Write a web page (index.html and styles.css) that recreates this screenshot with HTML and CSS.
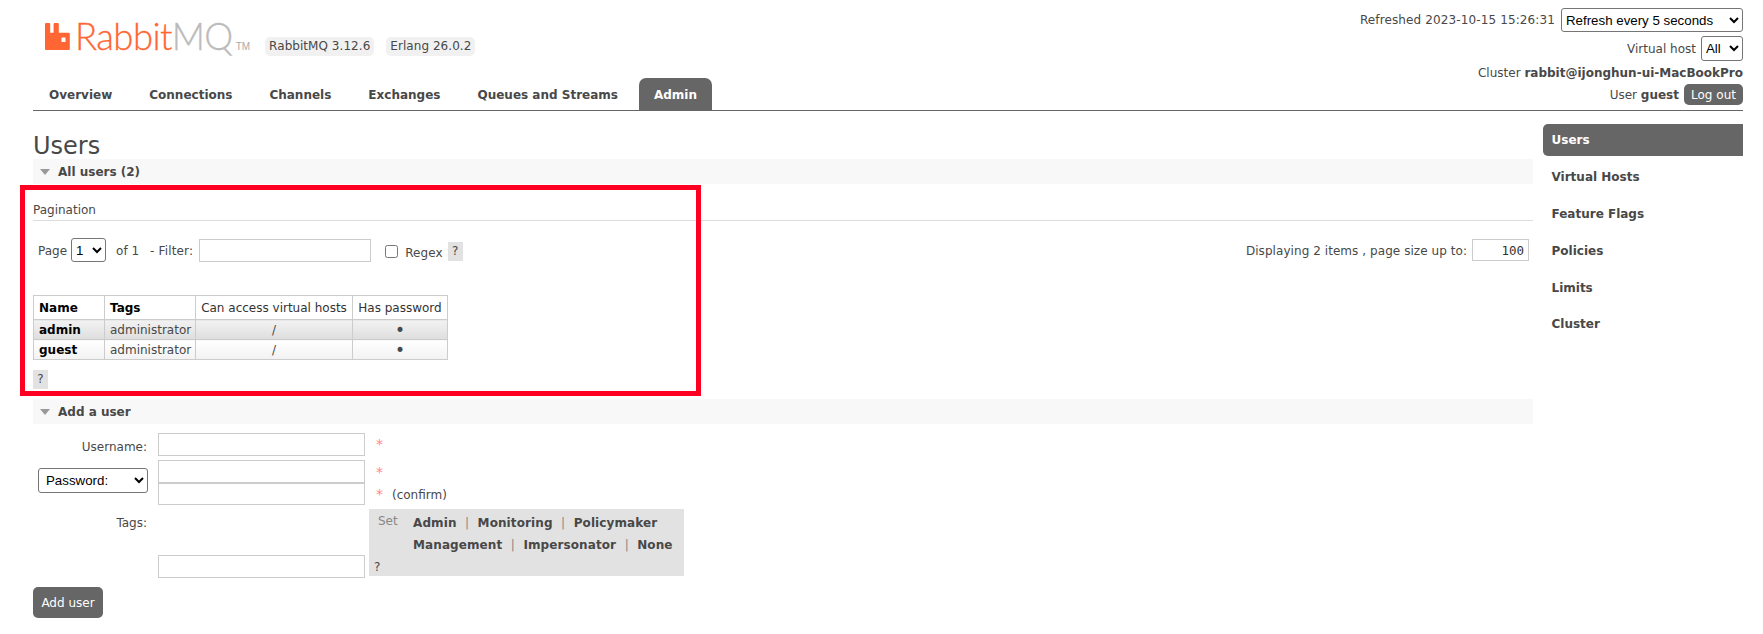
FILE: index.html
```html
<!DOCTYPE html>
<html lang="en">
<head>
<meta charset="utf-8">
<title>RabbitMQ Management</title>
<link rel="stylesheet" href="styles.css">
</head>
<body>
<div class="page">
  <header class="header">
    <div class="brand-col">
      <div class="brand">
        <svg class="logo-icon" viewBox="0 0 25 27" aria-hidden="true"><path fill="#ff6633" d="M1 0h3.2a1 1 0 0 1 1 1v8.8h3.4V1a1 1 0 0 1 1-1H12.800a1 1 0 0 1 1 1v8.800h10a1 1 0 0 1 1 1V26a1 1 0 0 1-1 1H1a1 1 0 0 1-1-1V1a1 1 0 0 1 1-1zM16.500 14.500v4.500h4v-4.500z" fill-rule="evenodd"/></svg>
        <span class="logo-text"><span class="logo-rabbit">Rabbit</span><span class="logo-mq">MQ</span></span>
        <span class="logo-tm">TM</span>
        <span class="chip chip-first">RabbitMQ 3.12.6</span>
        <span class="chip">Erlang 26.0.2</span>
      </div>
      <nav class="tabs">
        <a class="tab">Overview</a>
        <a class="tab">Connections</a>
        <a class="tab">Channels</a>
        <a class="tab">Exchanges</a>
        <a class="tab">Queues and Streams</a>
        <a class="tab tab-active">Admin</a>
      </nav>
    </div>
    <div class="status">
      <div class="status-row"><span class="refreshed">Refreshed 2023-10-15 15:26:31</span><select class="sel sel-refresh"><option>Refresh every 5 seconds</option></select></div>
      <div class="status-row status-vhost"><span>Virtual host</span><select class="sel sel-vhost"><option>All</option></select></div>
      <div class="status-row status-cluster"><span>Cluster&nbsp;<b>rabbit@ijonghun-ui-MacBookPro</b></span></div>
      <div class="status-row status-user"><span>User&nbsp;<b>guest</b></span><button class="logout" type="button">Log out</button></div>
    </div>
  </header>

  <div class="main">
    <main class="content">
      <h1 class="title">Users</h1>

      <section class="bar"><i class="arrow"></i>All users (2)</section>
      <div class="pagination-head">Pagination</div>
      <div class="pager">
        <span>Page</span>
        <select class="sel sel-page"><option>1</option></select>
        <span class="pager-of">of 1</span>
        <span class="pager-filter">- Filter:</span>
        <input class="field field-filter" type="text">
        <input class="check" type="checkbox">
        <span class="pager-regex">Regex</span>
        <span class="help help-regex">?</span>
        <span class="pager-display">Displaying 2 items , page size up to:</span>
        <input class="field field-size" type="text" value="100">
      </div>

      <table class="users">
        <thead>
          <tr><th class="left col-name">Name</th><th class="left col-tags">Tags</th><th class="col-vh">Can access virtual hosts</th><th class="col-pw">Has password</th></tr>
        </thead>
        <tbody>
          <tr class="alt1"><td class="strong">admin</td><td>administrator</td><td class="center">/</td><td class="center dot">•</td></tr>
          <tr class="alt2"><td class="strong">guest</td><td>administrator</td><td class="center">/</td><td class="center dot">•</td></tr>
        </tbody>
      </table>
      <div class="help help-table">?</div>

      <section class="bar bar-add"><i class="arrow"></i>Add a user</section>
      <form class="form">
        <label class="label label-user">Username:</label>
        <input class="field" type="text">
        <span class="star-cell"><span class="star">*</span></span>

        <div class="label label-pass"><select class="sel sel-pass"><option>Password:</option></select></div>
        <div class="pass-stack">
          <input class="field field-pass" type="text">
          <input class="field field-pass2" type="text">
        </div>
        <div class="star-cell star-stack">
          <span class="star">*</span>
          <span><span class="star">*</span><span class="confirm">(confirm)</span></span>
        </div>

        <label class="label label-tags">Tags:</label>
        <div class="tags-input"><input class="field" type="text"></div>
        <div class="tags-box">
          <span class="tags-set">Set</span>
          <div class="tags-lines">
            <div class="tags-line"><b>Admin</b><i>|</i><b>Monitoring</b><i>|</i><b>Policymaker</b></div>
            <div class="tags-line"><b>Management</b><i>|</i><b>Impersonator</b><i>|</i><b>None</b></div>
          </div>
          <span class="tags-help">?</span>
        </div>
      </form>
      <button class="add" type="button">Add user</button>
    </main>

    <aside class="side">
      <a class="side-item side-active">Users</a>
      <a class="side-item">Virtual Hosts</a>
      <a class="side-item">Feature Flags</a>
      <a class="side-item">Policies</a>
      <a class="side-item side-limits">Limits</a>
      <a class="side-item">Cluster</a>
    </aside>
  </div>
  <div class="highlight"></div>
</div>
</body>
</html>
```
FILE: styles.css
```css
* { box-sizing: border-box; }
html, body { margin: 0; padding: 0; background: #fff; }
body { font: 12px/14px "DejaVu Sans", Verdana, sans-serif; color: #484848; overflow: hidden; }
.page { position: relative; height: 634px; padding: 0 20px 0 33px; }

.header { display: flex; justify-content: space-between; height: 111px; border-bottom: 1px solid #666; }
.brand-col { display: flex; flex-direction: column; justify-content: space-between; }
.brand { display: flex; align-items: flex-start; padding: 23px 0 0 12px; }
.logo-icon { width: 25px; height: 27px; flex: none; }
.logo-text { font: 300 36.5px/27px Lato, "Liberation Sans", sans-serif; margin-left: 5px; letter-spacing: -0.6px; -webkit-text-stroke: 0.3px; }
.logo-rabbit { color: #ff6633; }
.logo-mq { color: #bbb; }
.logo-tm { font: 10px/12px "Liberation Sans", sans-serif; color: #aaa; margin: 18px 0 0 3px; }
.chip { background: #f1f1f1; border-radius: 5px; padding: 3px 4px; height: 19px; line-height: 13px; margin-top: 14px; margin-left: 12px; letter-spacing: 0.05px; }
.chip-first { margin-left: 15px; }

.tabs { display: flex; gap: 7px; padding-left: 1px; }
.tab { display: block; height: 32px; line-height: 34px; padding: 0 15px; font-weight: bold; border-radius: 7px 7px 0 0; color: #484848; }
.tab-active { background: #666; color: #fff; margin-left: -1px; }

.status { display: flex; flex-direction: column; align-items: flex-end; padding-top: 8px; }
.status-row { display: flex; align-items: center; }
.refreshed { letter-spacing: 0.12px; }
.status-vhost { margin-top: 4px; }
.status-cluster { margin-top: 5px; }
.status-user { margin-top: 4px; }
.sel { font: 13.3px "Liberation Sans", Arial, sans-serif; color: #000; background: #fff; border: 1px solid #767676; border-radius: 3px; }
.sel-refresh { width: 182px; height: 24px; margin-left: 6px; }
.sel-vhost { width: 42px; height: 25px; margin-left: 5px; }
.sel-page { width: 35px; height: 24px; margin: 0 0 0 4px; }
.sel-pass { width: 110px; height: 25px; padding-left: 3px; }
.logout { font: 12px "DejaVu Sans", sans-serif; color: #fff; background: #666; border: 0; border-radius: 5px; width: 59px; height: 21px; padding: 0; margin-left: 5px; }

.main { display: flex; align-items: flex-start; }
.content { width: 1500px; }
.title { font-size: 24px; line-height: 26px; font-weight: normal; margin: 22px 0 0; color: #484848; }
.bar { display: flex; align-items: center; height: 25px; background: #f8f8f8; font-weight: bold; padding-left: 7px; }
.arrow { width: 0; height: 0; border: 5px solid transparent; border-top: 6px solid #999; border-bottom: 0; margin-right: 8px; }

.pagination-head { margin-top: 19px; padding-bottom: 3px; border-bottom: 1px solid #ddd; }
.pager { display: flex; align-items: center; height: 24px; margin-top: 17px; padding: 0 4px 0 5px; }
.pager > span { padding-top: 1px; }
.pager-of { margin-left: 10px; }
.pager-filter { margin-left: 11px; letter-spacing: 0.15px; }
.field { border: 1px solid #ccc; height: 23px; width: 207px; background: #fff; padding: 0 4px; display: block; margin: 0; }
.field-filter { width: 172px; margin-left: 6px; }
.check { width: 13px; height: 13px; margin: 2px 0 0 14px; }
.pager-regex { margin: 4px 0 0 7px; letter-spacing: 0.1px; }
.help { background: #e2e2e2; width: 15px; height: 19px; line-height: 19px; text-align: center; }
.pager > .help-regex { margin: 3px 0 0 5px; padding-top: 0; }
.pager-display { margin-left: auto; margin-right: 5px; letter-spacing: 0.06px; }
.field-size { width: 57px; height: 22px; text-align: right; font: 12.5px "DejaVu Sans Mono", monospace; color: #333; }

.users { border-collapse: collapse; margin-top: 33px; width: 415px; table-layout: fixed; }
.users th, .users td { border: 1px solid #ccc; padding: 0 5px; height: 20px; white-space: nowrap; }
.users th { height: 24px; font-weight: normal; color: #333; text-align: center; }
.users th.left { font-weight: bold; text-align: left; color: #000; }
.col-name { width: 71px; }
.col-tags { width: 91px; }
.col-vh { width: 157px; }
.alt1 td { background: linear-gradient(#f2f2f2, #dedede); }
.alt2 td { background: linear-gradient(#fff, #f2f2f2); }
.users td.strong { font-weight: bold; color: #000; }
.users td.center { text-align: center; }
.users td.dot { font-size: 17px; line-height: 14px; }
.help-table { margin-top: 10px; }

.bar-add { margin-top: 10px; }
.form { display: grid; grid-template-columns: 125px 207px 1fr; margin-top: 9px; }
.label { text-align: right; padding-right: 11px; align-self: center; }
.label-user { padding-top: 5px; }
.label-pass { padding-right: 10px; }
.star-cell { padding-left: 11px; align-self: center; }
.star { color: #f88; font-size: 14px; }
.pass-stack { display: flex; flex-direction: column; margin-top: 4px; }
.field-pass { height: 23px; }
.field-pass2 { height: 22px; }
.star-stack { display: flex; flex-direction: column; gap: 8px; margin-top: 6px; }
.confirm { margin-left: 9px; }
.label-tags { align-self: start; padding-top: 11px; }
.tags-input { display: flex; align-items: flex-end; height: 73px; }
.tags-box { margin: 4px 0 0 4px; width: 315px; height: 67px; background: #e2e2e2; padding: 3px 9px; display: grid; grid-template-columns: 35px 1fr; grid-auto-rows: 22px; }
.tags-set { color: #888; line-height: 18px; }
.tags-line { display: flex; align-items: center; height: 22px; }
.tags-line b { letter-spacing: 0.1px; }
.tags-lines { grid-row: span 2; }
.tags-line i { font-style: normal; color: #888; margin: 0 8.5px; }
.tags-help { grid-column: 1; grid-row: 3; margin-left: -4px; line-height: 22px; }
.add { display: block; font: 12px "DejaVu Sans", sans-serif; color: #fff; background: #666; border: 0; border-radius: 5px; width: 70px; height: 31px; margin-top: 9px; padding: 0; }

.side { width: 200px; margin: 13px 0 0 10px; display: flex; flex-direction: column; }
.side-item { display: block; height: 32px; line-height: 32px; padding-left: 8.5px; font-weight: bold; color: #484848; margin-bottom: 5px; }
.side-limits { margin-bottom: 4px; }
.side-active { background: #666; color: #fff; border-radius: 5px 0 0 5px; }

.highlight { position: absolute; left: 20px; top: 185px; width: 681px; height: 211px; border: 5px solid #ff0022; pointer-events: none; }
```
